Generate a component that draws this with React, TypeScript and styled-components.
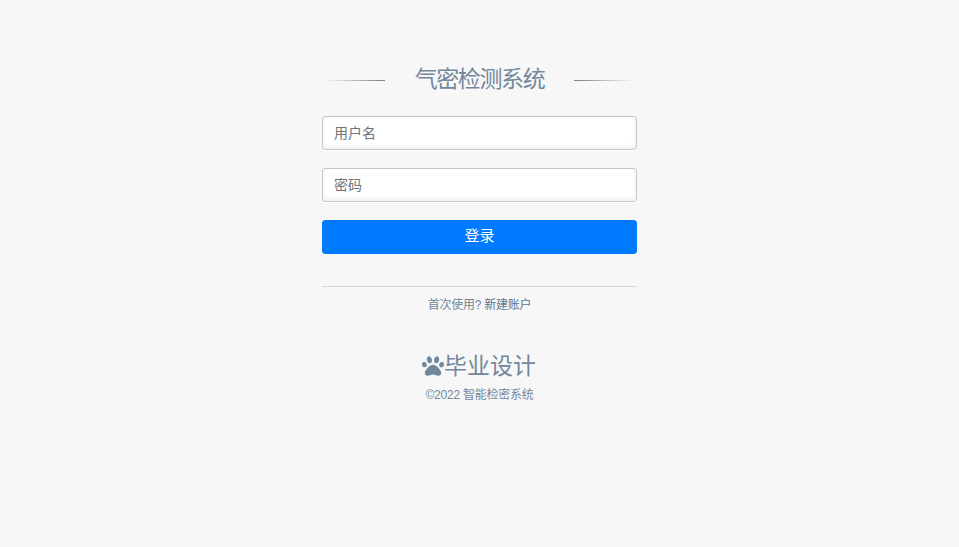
import React from "react";
import styled, { createGlobalStyle } from "styled-components";
import { FaPaw } from "react-icons/fa";

const Global = createGlobalStyle`
  html, body { margin: 0; padding: 0; background: #f7f7f7; height: 100%; }
  body { font-family: "Liberation Sans", "Noto Sans CJK SC", sans-serif; color: #73879c; }
`;

const Wrapper = styled.div`
  width: 315px;
  margin: 0 auto;
  padding-top: 66px;
`;

const TitleRow = styled.div`
  display: flex;
  align-items: center;
  justify-content: center;
  height: 28px;
  margin-bottom: 22px;
`;

const TitleLine = styled.span<{ $flip?: boolean }>`
  width: 60px;
  height: 1px;
  background: linear-gradient(${(p) => (p.$flip ? "to left" : "to right")}, rgba(126,126,126,0) 0%, #7e7e7e 100%);
`;

const Title = styled.h1`
  margin: -2px 29.5px 0;
  font-size: 23px;
  font-weight: 400;
  letter-spacing: -0.06em;
  line-height: 28px;
  color: #73879c;
  white-space: nowrap;
`;

const Field = styled.input`
  display: block;
  box-sizing: border-box;
  width: 100%;
  height: 34px;
  margin: 0 0 18px;
  padding: 6px 11px;
  border: 1px solid #c8c8c8;
  border-radius: 3px;
  background: #fff;
  box-shadow: 0 1px 0 #fff, 0 -2px 5px rgba(0,0,0,0.08) inset;
  font: 14px "Liberation Sans", "Noto Sans CJK SC", sans-serif;
  color: #555;
  outline: none;
  &::placeholder { color: #6f7479; opacity: 1; }
`;

const Submit = styled.button`
  display: block;
  width: 100%;
  height: 34px;
  padding: 0 0 5px;
  border: 1px solid #007bff;
  border-radius: 3px;
  background: #007bff;
  color: #fff;
  font: 15px "Liberation Sans", "Noto Sans CJK SC", sans-serif;
`;

const Separator = styled.div`
  margin-top: 32px;
  border-top: 1px solid #d8d8d8;
  padding-top: 10px;
  text-align: center;
  font-size: 12px;
  letter-spacing: -0.02em;
  line-height: 17px;
  color: #73879c;
`;

const RegisterLink = styled.a`
  color: #5a738e;
`;

const Brand = styled.div`
  margin-top: 37px;
  display: flex;
  align-items: center;
  justify-content: center;
  height: 30px;
  font-size: 23px;
  line-height: 30px;
  color: #73879c;
  svg { width: 22px; height: 22px; flex: none; margin-left: -1px; }
`;

const Copy = styled.p`
  margin: 6px 0 0;
  text-align: center;
  font-size: 12px;
  letter-spacing: -0.02em;
  line-height: 17px;
  color: #73879c;
`;

export default function App() {
  return (
    <>
      <Global />
      <Wrapper>
        <TitleRow>
          <TitleLine />
          <Title>气密检测系统</Title>
          <TitleLine $flip />
        </TitleRow>
        <Field placeholder="用户名" />
        <Field type="text" placeholder="密码" />
        <Submit>登录</Submit>
        <Separator>
          首次使用? <RegisterLink>新建账户</RegisterLink>
        </Separator>
        <Brand>
          <FaPaw />
          毕业设计
        </Brand>
        <Copy>©2022 智能检密系统</Copy>
      </Wrapper>
    </>
  );
}
